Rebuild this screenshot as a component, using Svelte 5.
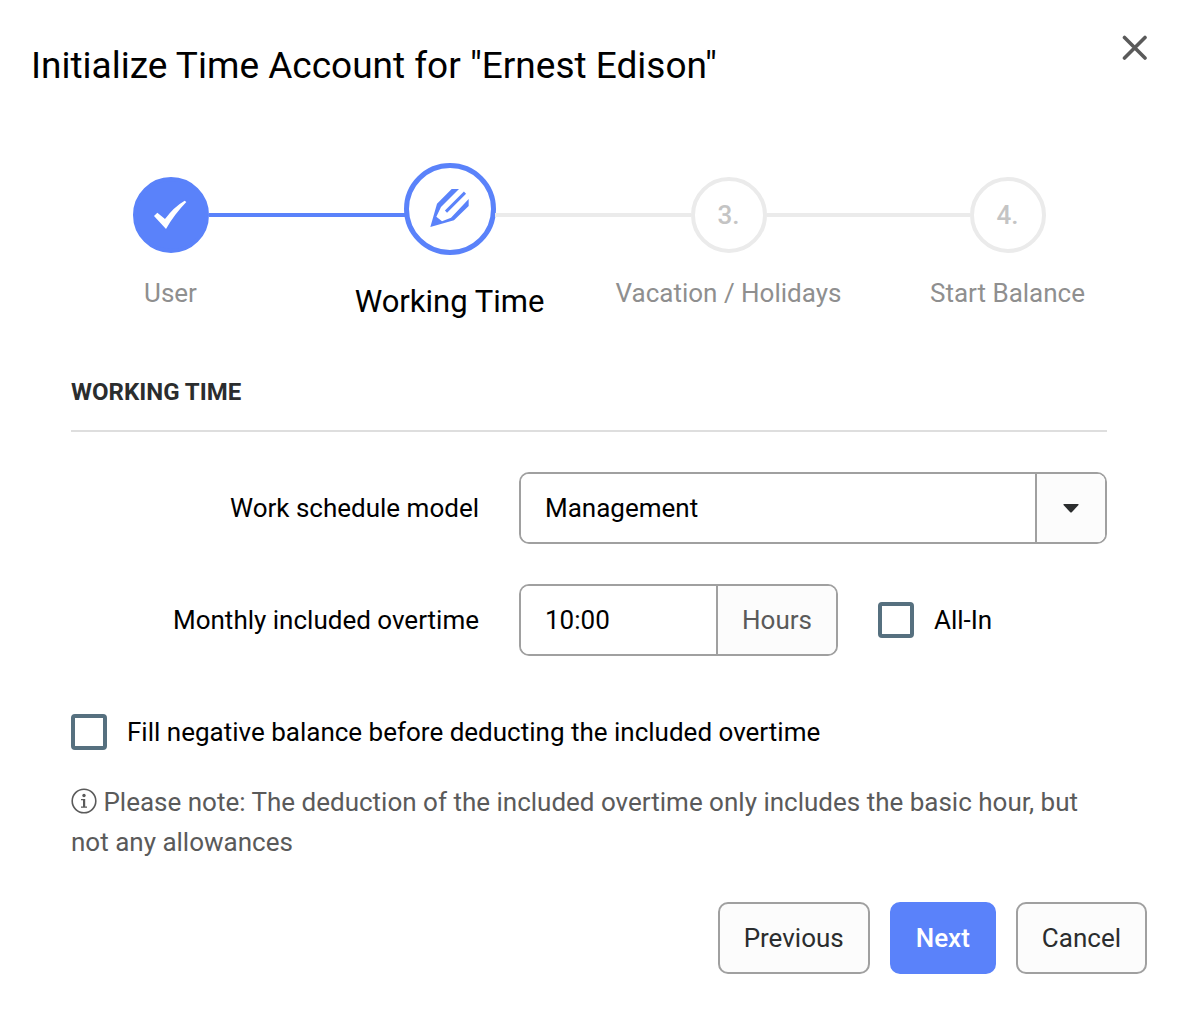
<script lang="ts">
  interface Step {
    label: string;
    state: 'done' | 'active' | 'open';
  }

  const steps: Step[] = [
    { label: 'User', state: 'done' },
    { label: 'Working Time', state: 'active' },
    { label: 'Vacation / Holidays', state: 'open' },
    { label: 'Start Balance', state: 'open' }
  ];

  let model = $state('Management');
  let overtime = $state('10:00');
  let allIn = $state(false);
  let fillNegative = $state(false);
</script>

<div class="dialog" role="dialog" aria-labelledby="dialog-title">
  <header>
    <h1 id="dialog-title">Initialize Time Account for "Ernest Edison"</h1>
    <button type="button" class="close" aria-label="Close">
      <svg viewBox="0 0 26 26" width="26" height="26">
        <path d="M3.500 3.500L24 24M24 3.500L3.500 24" fill="none" stroke="#5a5a5a" stroke-width="3.600" stroke-linecap="round" />
      </svg>
    </button>
  </header>

  <ol class="steps">
    {#each steps as step, i}
      <li class="step {step.state}">
        <div class="track">
          <span class="line"></span>
          <span class="circle">
            {#if step.state === 'done'}
              <svg viewBox="101 141 108 108" width="36" height="36">
                <path d="M104 198L114 188L137 207Q163 171 196 152L201 156Q164 194 140 237Z" fill="#fff" />
              </svg>
            {:else if step.state === 'active'}
              <svg viewBox="931 117 120 120" width="40" height="40">
                <path
                  d="M932 231L952 161L996 117H1018L964 171L950 200L967 214L994 203L1047 147V168L1003 211Z"
                  fill="#5a82fa"
                />
                <path d="M979 185L1036 128" stroke="#5a82fa" stroke-width="9" />
              </svg>
            {:else}
              {i + 1}.
            {/if}
          </span>
          <span class="line"></span>
        </div>
        <span class="step-label">{step.label}</span>
      </li>
    {/each}
  </ol>

  <form>
    <h2>WORKING TIME</h2>

    <div class="row">
      <label class="row-label" for="model">Work schedule model</label>
      <div class="select">
        <select id="model" bind:value={model}>
          <option>Management</option>
        </select>
        <span class="arrow">
          <svg viewBox="0 -1 16 10" width="16" height="10">
            <path d="M1 0H15Q16 0 15.500 1L9 8Q8 9 7 8L.5 1Q0 0 1 0Z" fill="#2b2d2e" />
          </svg>
        </span>
      </div>
    </div>

    <div class="row">
      <label class="row-label" for="overtime">Monthly included overtime</label>
      <div class="fields">
        <div class="input-group">
          <input id="overtime" type="text" bind:value={overtime} />
          <span class="unit">Hours</span>
        </div>
        <label class="check">
          <input type="checkbox" bind:checked={allIn} />
          All-In
        </label>
      </div>
    </div>

    <label class="check fill">
      <input type="checkbox" bind:checked={fillNegative} />
      Fill negative balance before deducting the included overtime
    </label>

    <p class="note">
      <svg viewBox="0 0 26 26" width="26" height="26">
        <circle cx="13" cy="13" r="11.800" fill="none" stroke="#5a5a5a" stroke-width="1.600" />
        <circle cx="13" cy="7.500" r="1.700" fill="#5a5a5a" />
        <path d="M10 11H14.200V18.500H16V19.700H10V18.500H12V12.200H10Z" fill="#5a5a5a" />
      </svg>
      Please note: The deduction of the included overtime only includes the basic hour, but not any allowances
    </p>
  </form>

  <footer>
    <button type="button" class="btn">Previous</button>
    <button type="button" class="btn primary">Next</button>
    <button type="button" class="btn">Cancel</button>
  </footer>
</div>

<style>
:global(body) {
  margin: 0;
  background: #fff;
}

.dialog {
  box-sizing: border-box;
  padding: 34px 37px 36px 31px;
  font-family: Roboto, "Liberation Sans", sans-serif;
  font-size: 26px;
  line-height: 40px;
  color: #000;
}

header {
  display: flex;
  justify-content: space-between;
  align-items: flex-start;
}

h1 {
  margin: 0;
  font-size: 37px;
  line-height: 64px;
  font-weight: 400;
}

.close {
  display: flex;
  padding: 0;
  border: none;
  background: none;
  cursor: pointer;
}

.steps {
  display: grid;
  grid-template-columns: repeat(4, 1fr);
  margin: 65px 0 0;
  padding: 0;
  list-style: none;
}

.step {
  display: flex;
  flex-direction: column;
  align-items: center;
  gap: 10px;
}

.track {
  display: flex;
  align-items: center;
  align-self: stretch;
  height: 104px;
}

.line {
  flex: 1;
  height: 4px;
  background: #ebebeb;
}

.step:first-child .line:first-child,
.step:last-child .line:last-child {
  background: none;
}

.done .line,
.active .line:first-child {
  background: #5a82fa;
}

.circle {
  box-sizing: border-box;
  display: flex;
  align-items: center;
  justify-content: center;
  width: 76px;
  height: 76px;
  border: 4px solid #ebebeb;
  border-radius: 50%;
  font-weight: 500;
  color: #c4c4c4;
}

.done .circle {
  border-color: #5a82fa;
  background: #5a82fa;
}

.active .circle {
  align-self: flex-start;
  width: 92px;
  height: 92px;
  border: 5px solid #5a82fa;
}

/* keeps the connector touching the raised circle */
.active .line {
  margin: 0 -1px;
}

.step-label {
  line-height: 32px;
  color: #8f8f8f;
}

.active .step-label {
  font-size: 31px;
  line-height: 50px;
  color: #000;
}

form {
  padding: 0 40px;
}

h2 {
  margin: 45px 0 40px;
  padding-bottom: 18px;
  border-bottom: 2px solid #dedede;
  font-size: 24px;
  line-height: 40px;
  font-weight: 700;
  color: #2b2d2e;
}

.row {
  display: grid;
  grid-template-columns: 34fr 49fr;
  align-items: center;
  column-gap: 40px;
  margin-bottom: 40px;
}

.row-label {
  text-align: right;
}

.select,
.input-group {
  box-sizing: border-box;
  height: 72px;
  border: 2px solid #a0a0a0;
  border-radius: 10px;
  overflow: hidden;
}

.select {
  display: grid;
  grid-template-columns: 1fr 70px;
}

select {
  grid-area: 1 / 1 / 2 / 3;
  appearance: none;
  padding: 0 94px 0 24px;
  border: none;
  background: #fff;
  font: inherit;
  color: #000;
}

.arrow {
  grid-area: 1 / 2;
  display: flex;
  align-items: center;
  justify-content: center;
  border-left: 2px solid #a0a0a0;
  background: #fcfcfc;
  pointer-events: none;
}

.fields {
  display: flex;
  align-items: center;
  gap: 40px;
}

.input-group {
  display: flex;
}

.input-group input {
  box-sizing: border-box;
  width: 195px;
  padding: 0 24px;
  border: none;
  font: inherit;
  color: #000;
}

.unit {
  display: flex;
  align-items: center;
  padding: 0 24px;
  border-left: 2px solid #a0a0a0;
  background: #fcfcfc;
  color: #5a5a5a;
}

.check {
  display: flex;
  align-items: center;
  gap: 20px;
}

.check input {
  appearance: none;
  box-sizing: border-box;
  flex: none;
  width: 36px;
  height: 36px;
  margin: 0;
  border: 4px solid #56707f;
  border-radius: 4px;
  background: #fff;
}

.check input:checked {
  background: #56707f;
}

.fill {
  margin-top: 56px;
}

.note {
  margin: 30px 0 40px;
  color: #5a5a5a;
}

.note svg {
  vertical-align: -3px;
}

footer {
  display: flex;
  justify-content: flex-end;
  gap: 20px;
}

.btn {
  height: 72px;
  padding: 0 24px;
  border: 2px solid #a0a0a0;
  border-radius: 10px;
  background: #fcfcfc;
  font: inherit;
  color: #2b2d2e;
  cursor: pointer;
}

.primary {
  border-color: #5a82fa;
  background: #5a82fa;
  font-weight: 500;
  color: #fff;
}
</style>
